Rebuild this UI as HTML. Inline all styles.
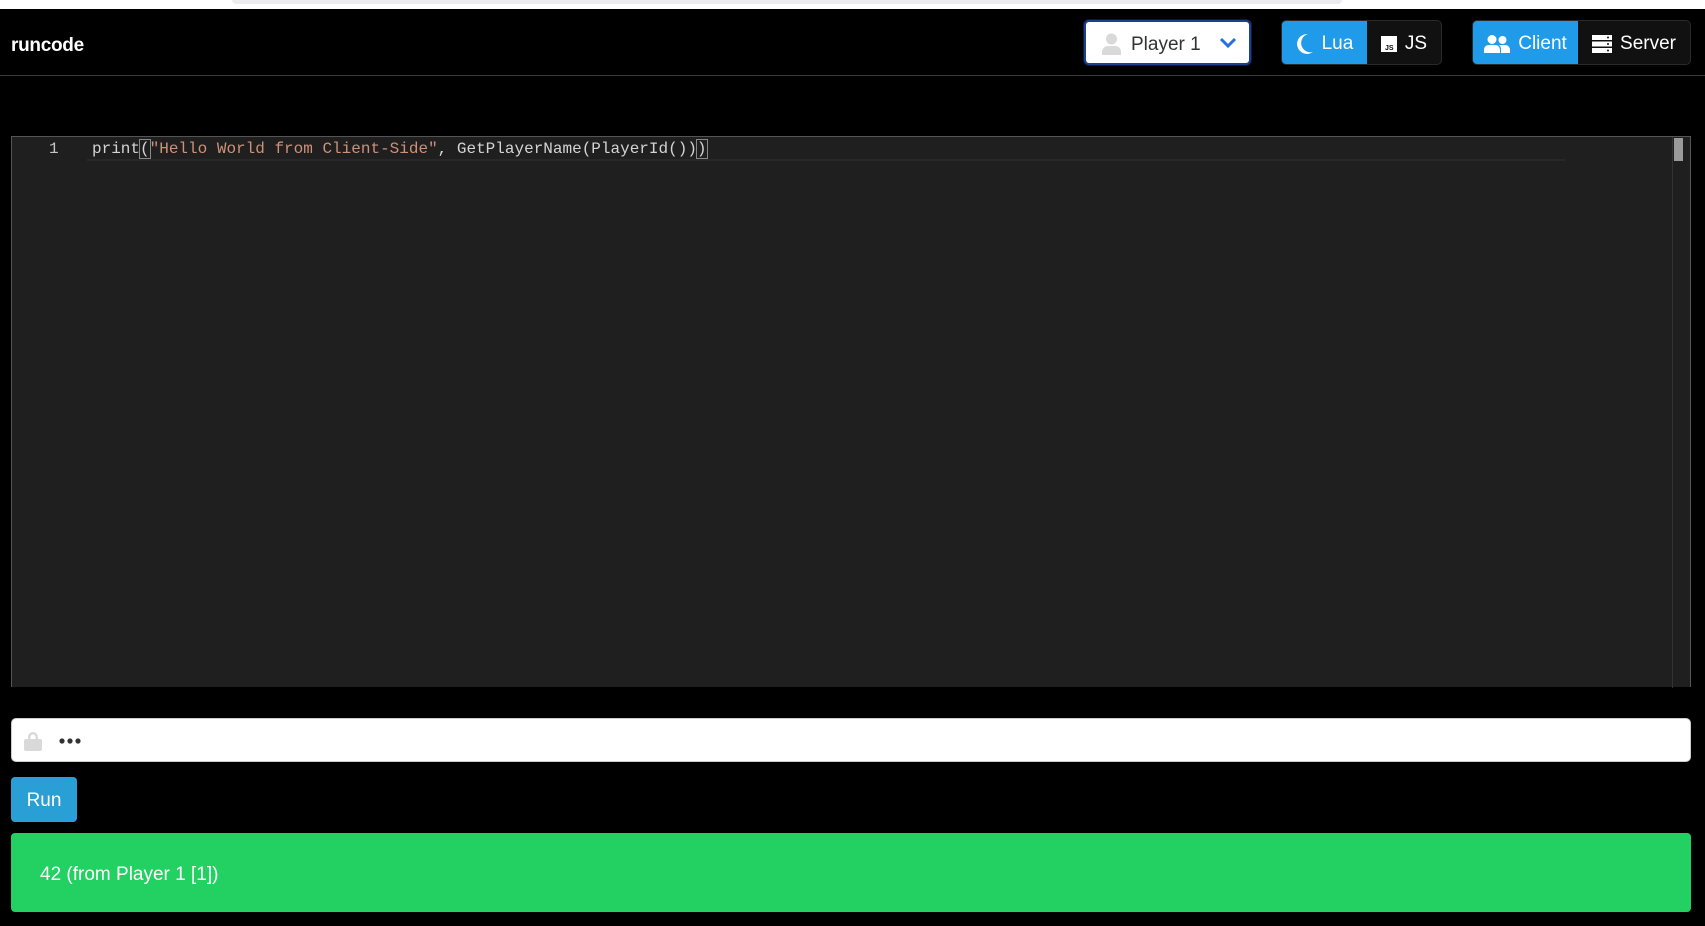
<!DOCTYPE html>
<html><head><meta charset="utf-8"><style>
*{box-sizing:border-box;margin:0;padding:0}
body{width:1705px;height:926px;background:#000;font-family:"Liberation Sans",sans-serif;position:relative;overflow:hidden;color:#fff}
.topstrip{position:absolute;left:0;top:0;width:1705px;height:9px;background:#fff}
.topstrip .bar{position:absolute;left:232px;top:0;width:1110px;height:4px;background:#ececef;border-radius:0 0 6px 6px}
.nav{position:absolute;left:0;top:9px;width:1705px;height:67px;border-bottom:1px solid #3a3a3a}
.brand{position:absolute;left:11px;top:26px;font-weight:bold;font-size:19px;letter-spacing:-0.3px}
.dd{position:absolute;left:1084px;top:20px;width:167px;height:45px;background:#fff;border:2px solid #1d3f8f;border-radius:5px;box-shadow:0 0 0 1px #0a1a40;color:#333;font-size:19px}
.dd span{position:absolute;left:45px;top:12px}
.grp{position:absolute;top:20px;height:45px;border-radius:5px;overflow:hidden;display:flex;border:1px solid #2a2a2a;background:#111}
.grp div{height:100%;display:flex;align-items:center;justify-content:center;font-size:19px;color:#fff;gap:8px;padding-top:3px}
.blue{background:#209bea}
.ed{position:absolute;left:11px;top:136px;width:1680px;height:551px;background:#1f1f1f;border:1px solid #555;border-bottom:none}
.code{position:absolute;top:2px;font-family:"Liberation Mono",monospace;font-size:16px;line-height:20px}
.cur{position:absolute;left:75px;top:0px;width:1478px;height:24px;border-bottom:2px solid #282828}
.input{position:absolute;left:11px;top:718px;width:1680px;height:44px;background:#fff;border-radius:5px;border:1px solid #ccc}
.run{position:absolute;left:11px;top:777px;width:66px;height:45px;background:#2a9fd6;border-radius:4px;font-size:19px;display:flex;align-items:center;justify-content:center;padding-top:3px}
.out{position:absolute;left:11px;top:833px;width:1680px;height:79px;background:#22d162;border-radius:4px;font-size:19px}
.out span{position:absolute;left:29px;top:31px}
</style></head><body>
<div class="topstrip"><div class="bar"></div></div>
<div class="nav"><div class="brand">runcode</div></div>
<div class="dd">
<svg style="position:absolute;left:16px;top:11px" width="19" height="22" viewBox="0 0 19 22"><circle cx="9.5" cy="6" r="5.5" fill="#d9d9d9"/><path d="M0 22v-3c0-4 3-6 6-6h7c3 0 6 2 6 6v3z" fill="#d9d9d9"/></svg>
<span>Player 1</span>
<svg style="position:absolute;left:133px;top:14px" width="18" height="14" viewBox="0 0 18 14"><path d="M2 3l7 7 7-7" stroke="#2a6fe0" stroke-width="3" fill="none"/></svg>
</div>
<div class="grp" style="left:1281px;width:161px">
<div class="blue" style="width:86px"><svg width="18" height="22" viewBox="0 0 18 22"><path d="M12 1A10 10 0 1 0 17 19 9 9 0 0 1 12 1z" fill="#fff"/></svg>Lua</div>
<div style="width:75px"><svg width="16" height="16" viewBox="0 0 16 16"><rect width="16" height="16" fill="#fff"/><text x="4" y="14" font-size="7" font-weight="bold" fill="#000" font-family="Liberation Sans">JS</text></svg>JS</div>
</div>
<div class="grp" style="left:1472px;width:219px">
<div class="blue" style="width:106px"><svg width="26" height="18" viewBox="0 0 26 18"><circle cx="8" cy="4.5" r="4.5" fill="#fff"/><circle cx="18.5" cy="5" r="4" fill="#fff"/><path d="M0 18v-3c0-3 2-5 5-5h6c3 0 5 2 5 5v3z M17 18v-4c0-2-1-3-2-4h6c3 0 5 2 5 5v3z" fill="#fff"/></svg>Client</div>
<div style="width:113px"><svg width="20" height="18" viewBox="0 0 20 18"><rect y="0" width="20" height="5" fill="#fff"/><rect y="6.5" width="20" height="5" fill="#fff"/><rect y="13" width="20" height="5" fill="#fff"/><circle cx="16" cy="2.5" r="1" fill="#111"/><circle cx="16" cy="9" r="1" fill="#111"/><circle cx="16" cy="15.5" r="1" fill="#111"/></svg>Server</div>
</div>
<div class="ed">
<div class="cur"></div>
<div class="code" style="left:37px;color:#c6c6c6">1</div>
<div class="code" style="left:80px;color:#d4d4d4;white-space:pre">print<span style="outline:1px solid #888">(</span><span style="color:#ce9178">"Hello World from Client-Side"</span>, GetPlayerName(PlayerId())<span style="outline:1px solid #888">)</span></div>
<div style="position:absolute;left:1660px;top:0;width:1px;height:551px;background:#333"></div>
<div style="position:absolute;left:1662px;top:1px;width:9px;height:23px;background:#9a9a9a"></div>
</div>
<div class="input">
<svg style="position:absolute;left:12px;top:12px" width="18" height="20" viewBox="0 0 18 20"><path d="M4 9V6a5 5 0 0 1 10 0v3h-2.5V6a2.5 2.5 0 0 0-5 0v3z" fill="#d9d9d9"/><rect y="8" width="18" height="12" rx="2" fill="#d9d9d9"/></svg>
<svg style="position:absolute;left:47px;top:19px" width="24" height="6" viewBox="0 0 24 6"><circle cx="3" cy="3" r="2.6" fill="#333"/><circle cx="11" cy="3" r="2.6" fill="#333"/><circle cx="19" cy="3" r="2.6" fill="#333"/></svg>
</div>
<div class="run">Run</div>
<div class="out"><span>42 (from Player 1 [1])</span></div>
</body></html>
